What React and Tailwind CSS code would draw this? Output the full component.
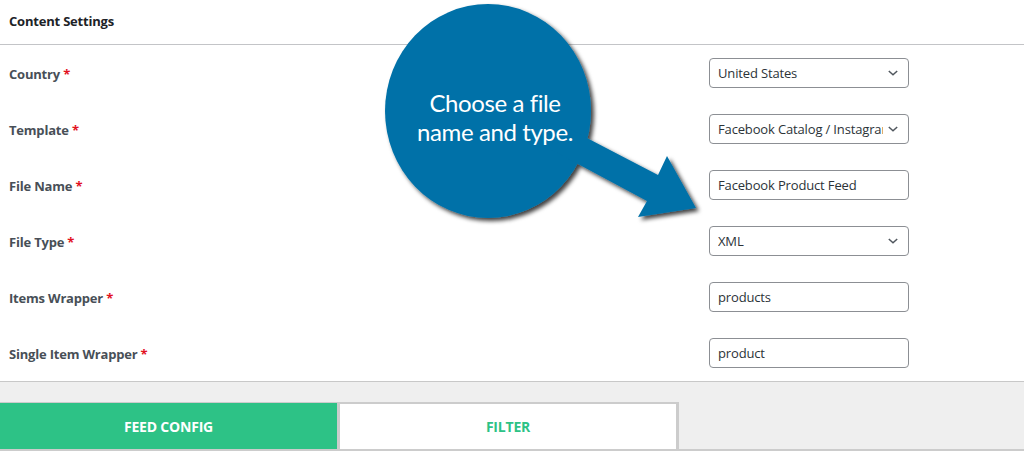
import React from "react";

const FIELDS = [
  { label: "Country", type: "select", value: "United States" },
  { label: "Template", type: "select", value: "Facebook Catalog / Instagram" },
  { label: "File Name", type: "input", value: "Facebook Product Feed" },
  { label: "File Type", type: "select", value: "XML" },
  { label: "Items Wrapper", type: "input", value: "products" },
  { label: "Single Item Wrapper", type: "input", value: "product" },
];

function Chevron() {
  return (
    <svg width="12" height="8" viewBox="0 0 12 8" fill="none" stroke="#50575e" strokeWidth="1.5">
      <path d="M1.8 2L6 5.8L10.2 2" />
    </svg>
  );
}

function Field({ field }) {
  return (
    <div className="h-[30px] w-[200px] rounded-[4px] border border-[#8c8f94] bg-white flex items-center pl-[8px] pr-[9px] overflow-hidden">
      <span className="flex-1 pt-px whitespace-nowrap overflow-hidden text-[13px] text-[#2c3338] tracking-[-0.15px]">{field.value}</span>
      {field.type === "select" && (
        <span className="shrink-0 pl-[4px] bg-white flex items-center"><Chevron /></span>
      )}
    </div>
  );
}

function Callout() {
  return (
    <div className="absolute inset-0 pointer-events-none">
      <svg width="1024" height="456" viewBox="0 0 1024 456" className="absolute left-0 top-0">
        <defs>
          <filter id="sh" x="-20%" y="-20%" width="140%" height="140%">
            <feDropShadow dx="3" dy="3" stdDeviation="2" floodColor="#000" floodOpacity="0.75" />
          </filter>
        </defs>
        <g filter="url(#sh)" fill="#0071a8">
          <ellipse cx="488" cy="111" rx="103" ry="107" />
          <polygon points="560,124 658,175 667,156 696,208 638,217 647,201 550,149" />
        </g>
      </svg>
      <div className="absolute left-[388px] top-[88px] w-[214px] text-center text-white text-[24px] leading-[29px] tracking-[-0.4px]" style={{ fontFamily: "Lato, 'Open Sans', sans-serif" }}>
        Choose a file<br />name and type.
      </div>
    </div>
  );
}

export default function App() {
  return (
    <div className="relative w-[1024px] h-[456px] overflow-hidden bg-white" style={{ fontFamily: "'Open Sans', 'Noto Sans', sans-serif" }}>
      <div className="h-[45px] border-b border-[#c3c4c7] px-[9px] flex items-center">
        <h2 className="text-[13px] font-bold text-[#1d2327] tracking-[-0.2px]">Content Settings</h2>
      </div>

      <div>
        {FIELDS.map((f) => (
          <div key={f.label} className="h-[56px] flex items-center pl-[9px] pr-[115px]">
            <label className="flex-1 pt-[3px] text-[13px] font-bold text-[#484f57] tracking-[-0.2px]">
              {f.label} <span className="text-[#e2121f]">*</span>
            </label>
            <Field field={f} />
          </div>
        ))}
      </div>

      <div className="border-t border-[#c8c8c8] bg-[#efefef] pt-[20px]">
        <div className="flex items-end">
          <div className="w-[337px] h-[47px] border-t-[1px] border-[#cccccc] bg-[#2dc286] flex items-center justify-center pt-px">
            <span className="text-[14px] font-bold text-white tracking-[-0.2px]">FEED CONFIG</span>
          </div>
          <div className="w-[342px] h-[47px] border-t-2 border-l-[3px] border-r-[3px] border-[#cccccc] bg-white flex items-center justify-center">
            <span className="text-[14px] font-bold text-[#2dc286] tracking-[-0.2px]">FILTER</span>
          </div>
        </div>
        <div className="h-[2px] bg-[#cccccc]" />
      </div>

      <Callout />
    </div>
  );
}
